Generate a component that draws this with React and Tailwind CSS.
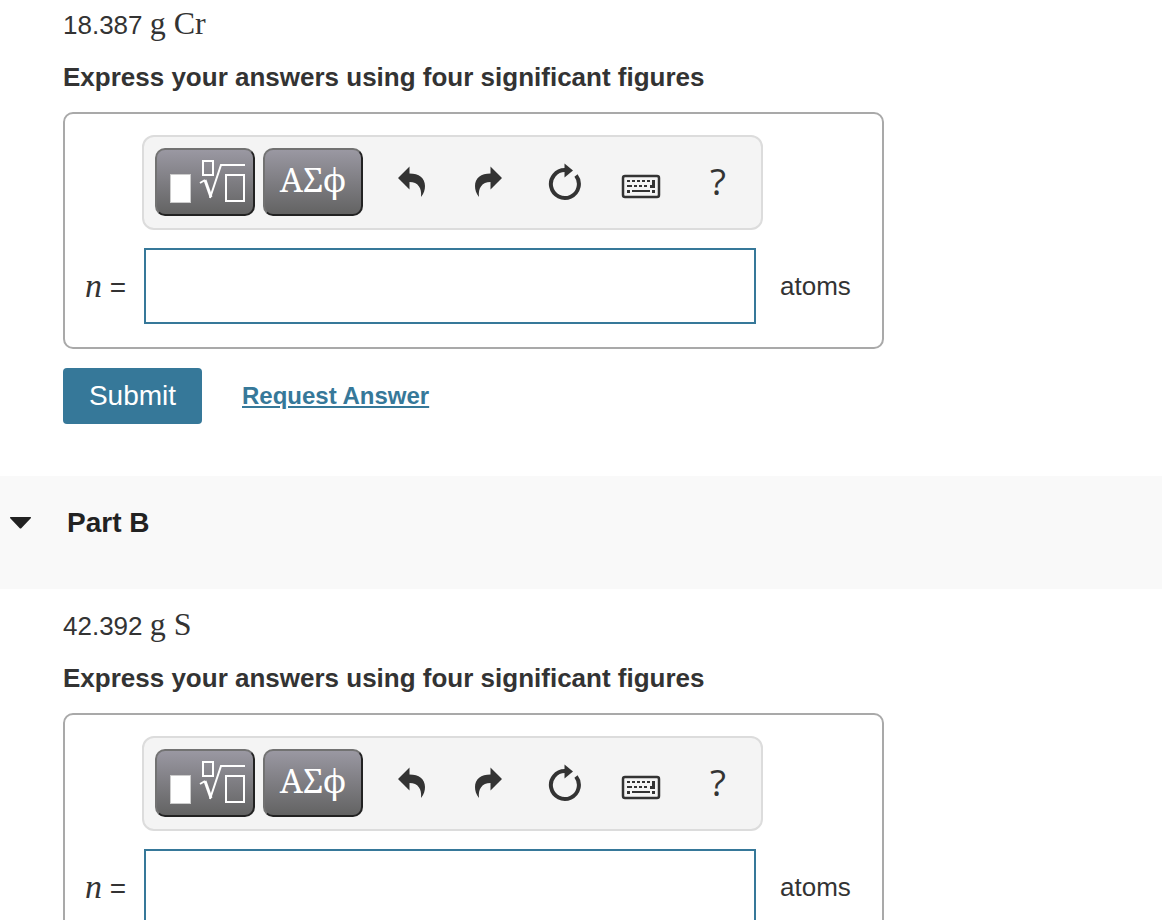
import React from 'react';

const parts = [
  { id: 'a', amount: '18.387', symbol: 'Cr' },
  { id: 'b', title: 'Part B', amount: '42.392', symbol: 'S' },
];

const UndoIcon = () => (
  <svg width="28" height="32" viewBox="0 0 28 32" fill="#333">
    <path d="M1 12 L12.500 0.500 V7.500 C22 7.500 28 12 28 20 C28 24 27 27 24 31 C25 22 21 16 12.500 16 V23.500 Z" />
  </svg>
);

const RedoIcon = () => (
  <svg width="28" height="32" viewBox="0 0 28 32" fill="#333">
    <path d="M28 12 L16.500 0.500 V7.500 C7 7.500 1 12 1 20 C1 24 2 27 5 31 C4 22 8 16 16.500 16 V23.500 Z" />
  </svg>
);

const ResetIcon = () => (
  <svg width="34" height="38" viewBox="0 0 34 38">
    <path d="M17 7 A14 14 0 1 0 28 12.500" fill="none" stroke="#333" strokeWidth="4" />
    <path d="M16.500 0.500 L25 7.500 L16.500 14.500 Z" fill="#333" />
  </svg>
);

const KeyboardIcon = () => (
  <svg width="42" height="36" viewBox="0 -10 42 36" fill="#333">
    <rect x="2" y="2" width="36" height="21" rx="2" fill="none" stroke="#333" strokeWidth="2.500" />
    <path d="M6 6h3v2h-3z M11 6h3v2h-3z M16 6h3v2h-3z M21 6h3v2h-3z M26 6h3v2h-3z M31 6h3v8h-5v-3h2z" />
    <path d="M6 11h5v2h-5z M13 11h3v2h-3z M18 11h3v2h-3z M23 11h3v2h-3z" />
    <path d="M6 16h3v3h-3z M11 16h18v2h-18z M31 16h3v3h-3z" />
  </svg>
);

const TemplateIcon = () => (
  <svg width="76" height="46" viewBox="0 0 76 46" fill="none" stroke="#fff">
    <rect x="0.500" y="15.500" width="20" height="28" fill="#fff" stroke="#ccc" strokeWidth="1" />
    <rect x="33" y="2" width="10" height="14" strokeWidth="2" />
    <path d="M30 24 L35 21" strokeWidth="2" />
    <path d="M35 21 L41 38" strokeWidth="3" />
    <path d="M40 39 L51 6 H75" strokeWidth="2" />
    <rect x="56" y="16" width="18" height="26" strokeWidth="2" />
  </svg>
);

const tools = [
  { label: 'Undo', icon: <UndoIcon /> },
  { label: 'Redo', icon: <RedoIcon /> },
  { label: 'Reset', icon: <ResetIcon /> },
  { label: 'Keyboard shortcuts', icon: <KeyboardIcon /> },
];

const paletteClass =
  'flex h-[68px] w-[100px] shrink-0 items-center rounded-[10px] border-2 border-t-[#727272] border-l-[#727272] border-r-[#222] border-b-[#222] bg-linear-to-b from-[#9a98a2] to-[#636363] text-white';

const Toolbar = () => (
  <div role="toolbar" className="ml-[77px] flex h-[95px] w-[621px] items-start rounded-xl border-2 border-[#dcdcdc] bg-[#f4f4f4] pt-[11px] pl-[11px]">
    <button type="button" aria-label="Templates" className={`${paletteClass} pl-[13px]`}>
      <TemplateIcon />
    </button>
    <button type="button" aria-label="Greek symbols" className={`${paletteClass} ml-2 justify-center pb-1 font-['Noto_Serif','DejaVu_Serif','Liberation_Serif',serif] text-[33px]`}>
      ΑΣϕ
    </button>
    <div className="ml-[9px] flex h-[68px]">
      {tools.map((tool) => (
        <button key={tool.label} type="button" aria-label={tool.label} className="flex w-[77px] items-center justify-center">
          {tool.icon}
        </button>
      ))}
      <button type="button" aria-label="Help" className="w-[76px] pb-0.5 font-['Open_Sans',sans-serif] text-[37px] text-[#333]">
        ?
      </button>
    </div>
  </div>
);

const Question = ({ part }) => (
  <section className="pr-6 pl-[63px]">
    <p className="h-[51px] text-[26px] leading-[47px]">
      {part.amount} <span className="font-['Liberation_Serif',serif] text-[32px]">g {part.symbol}</span>
    </p>
    <p className="h-[61px] text-[26px] leading-[52px] font-bold">Express your answers using four significant figures</p>

    <form onSubmit={(e) => e.preventDefault()}>
      <div className="max-w-[821px] rounded-[10px] border-2 border-[#a9a9a9] pt-[21px] pb-[23px]">
        <Toolbar />
        <div className="mt-[18px] flex items-center">
          <label htmlFor={`answer-${part.id}`} className="w-[79px] shrink-0 pb-0.5 pl-5 text-[28px]">
            <i className="font-['Liberation_Serif',serif] text-[34px]">n</i> =
          </label>
          <input id={`answer-${part.id}`} type="text" className="h-[76px] w-[612px] border-2 border-[#367899] bg-white px-3 text-[26px] outline-none" />
          <span className="ml-6 text-[26px]">atoms</span>
        </div>
      </div>

      <div className="mt-[19px] flex items-center">
        <button type="submit" className="h-14 w-[139px] rounded-[4px] bg-[#367899] text-[28px] text-white">
          Submit
        </button>
        <a href="#answer" className="ml-10 text-[24px] font-bold text-[#367899] underline">
          Request Answer
        </a>
      </div>
    </form>
  </section>
);

export default function App() {
  return (
    <main className="min-h-screen bg-white pb-12 font-['Liberation_Sans',Arial,sans-serif] text-[#333]">
      {parts.map((part) => (
        <React.Fragment key={part.id}>
          {part.title && (
            <h2 className="mt-[52px] mb-3 h-[113px] bg-[#f9f9f9] text-[28px] font-bold text-[#222]">
              <button type="button" className="flex items-center gap-9 pt-[26px] pl-[10px]">
                <svg width="21" height="12" viewBox="0 0 21 12" fill="#222">
                  <path d="M1 0 H20 Q22 0 20.500 1.500 L11.500 11 Q10.500 12 9.500 11 L0.500 1.500 Q-1 0 1 0Z" />
                </svg>
                {part.title}
              </button>
            </h2>
          )}
          <Question part={part} />
        </React.Fragment>
      ))}
    </main>
  );
}
